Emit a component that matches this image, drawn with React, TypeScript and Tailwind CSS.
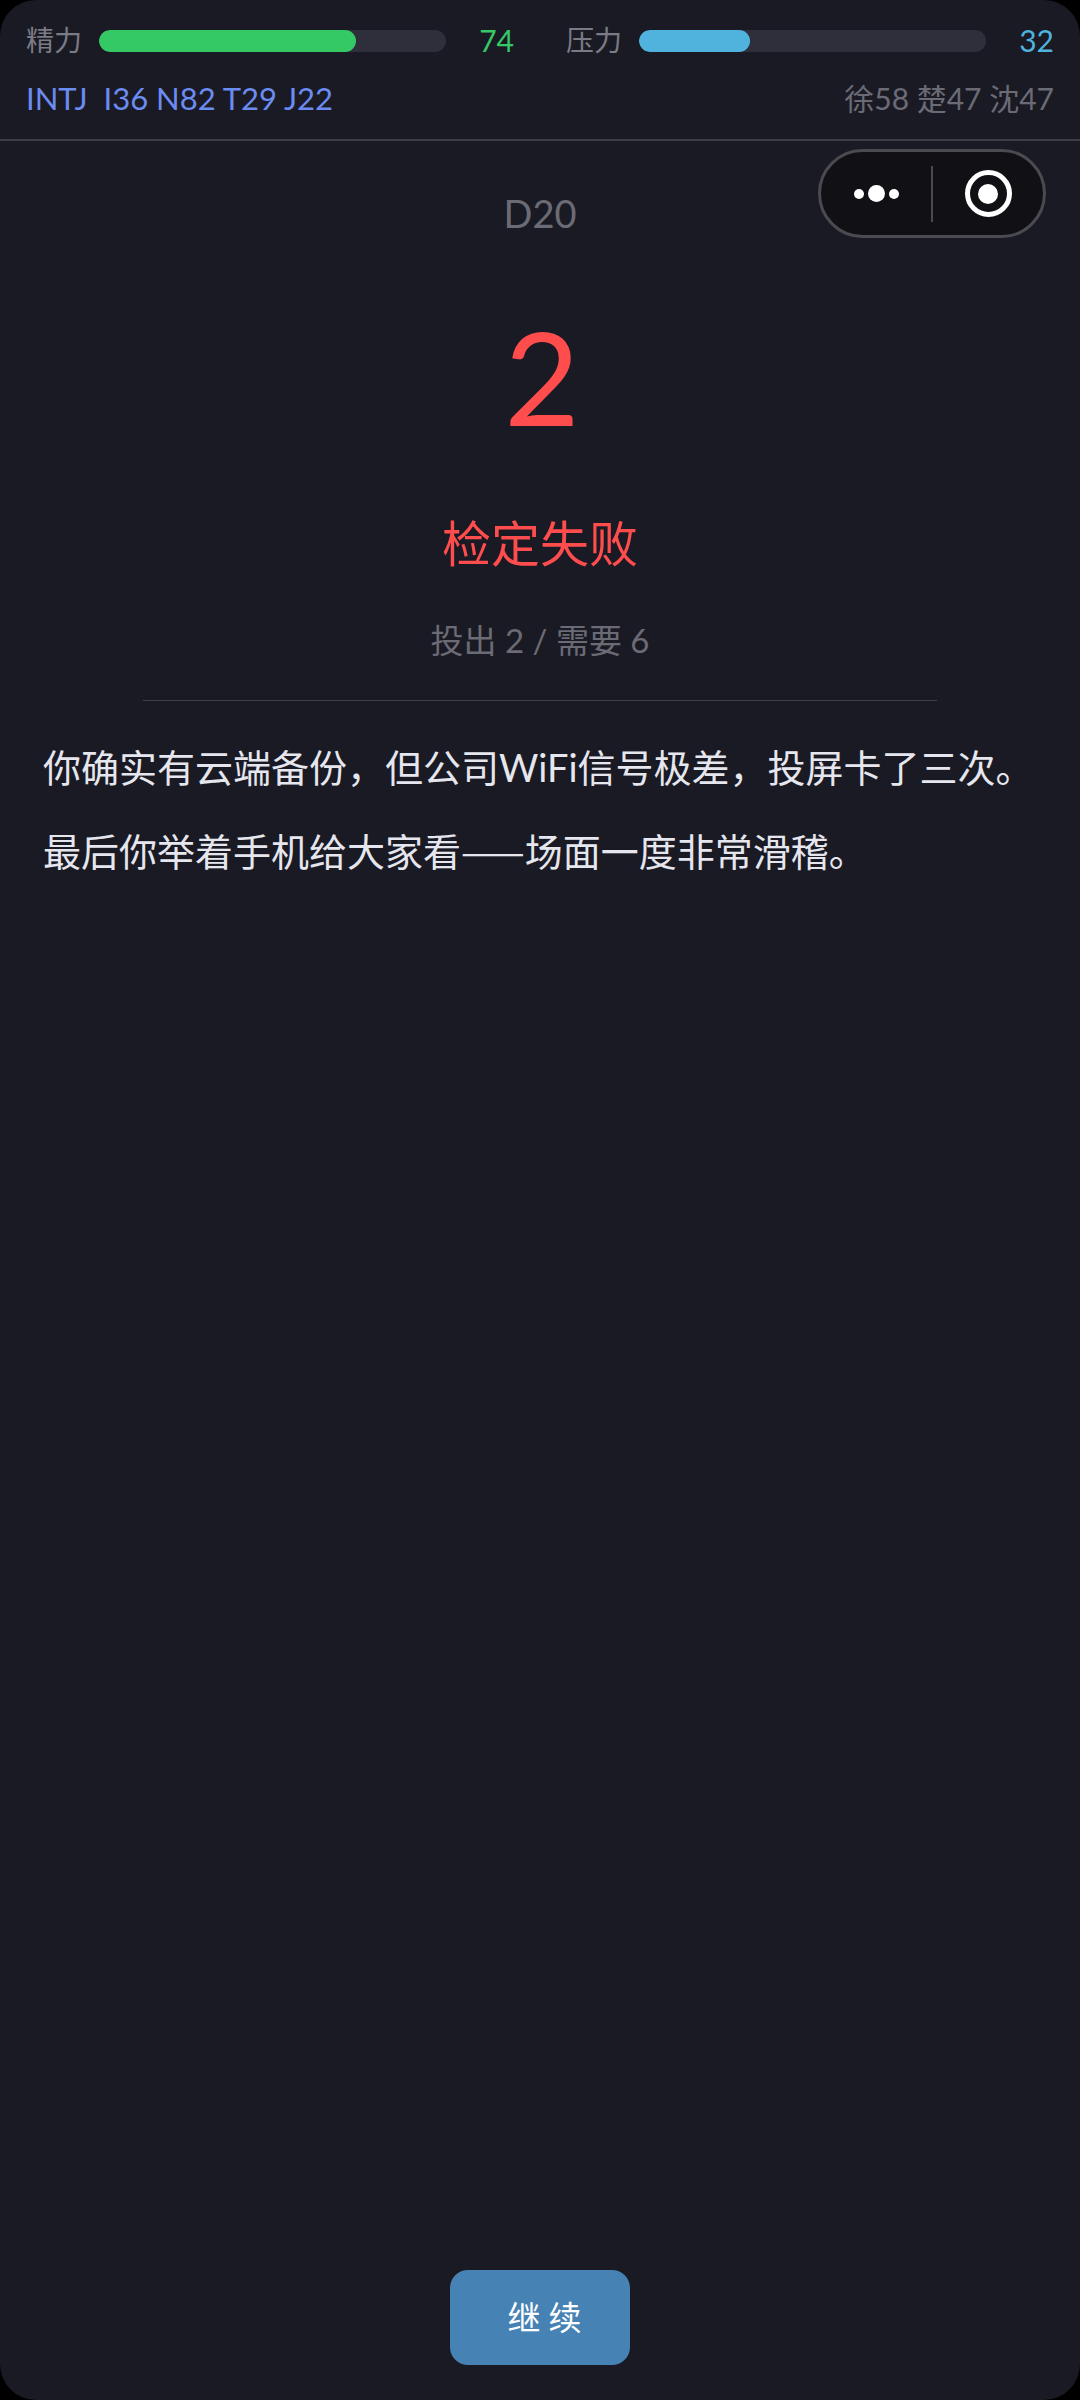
const fontStack = "font-['Lato','Noto_Sans_CJK_SC',sans-serif]";

const StatBar = ({ label, value, percent, fill, text }: { label: string; value: number; percent: number; fill: string; text: string }) => (
  <div className="flex w-[488px] items-center">
    <span className="w-[73px] pb-[2px] text-[28px] leading-[40px] text-[#7b7b85]">{label}</span>
    <div className="h-[22px] w-[347px] overflow-hidden rounded-full bg-[#2f2f3b]">
      <div className={`h-full rounded-full ${fill}`} style={{ width: `${percent}%` }} />
    </div>
    <span className={`flex-1 pb-[2px] text-right text-[30px] leading-[40px] ${text}`}>{value}</span>
  </div>
);

const Capsule = () => (
  <div className="absolute left-[818px] top-[149px] flex h-[89px] w-[228px] items-center rounded-full border-[3px] border-[#4a4a50] bg-[#101015]">
    <div className="flex w-[110px] items-center justify-center gap-[4px]">
      <span className="size-[10px] rounded-full bg-white" />
      <span className="size-[17px] rounded-full bg-white" />
      <span className="size-[10px] rounded-full bg-white" />
    </div>
    <div className="h-[56px] w-[2px] bg-[#4a4a50]" />
    <div className="flex flex-1 items-center justify-center">
      <div className="flex size-[47px] items-center justify-center rounded-full border-[5px] border-white">
        <span className="size-[20px] rounded-full bg-white" />
      </div>
    </div>
  </div>
);

export default function App() {
  return (
    <div className={`h-[2400px] w-[1080px] bg-black ${fontStack}`}>
      <div className="relative flex h-full flex-col overflow-hidden rounded-[36px] bg-[#1a1a24]">
        <header className="h-[141px] border-b-2 border-[#3e3e46] px-[26px] pt-[20px]">
          <div className="flex justify-between">
            <StatBar label="精力" value={74} percent={74} fill="bg-[#34c964]" text="text-[#34c964]" />
            <StatBar label="压力" value={32} percent={32} fill="bg-[#4fb3de]" text="text-[#4fb3de]" />
          </div>
          <div className="mt-[14px] flex items-center justify-between leading-[44px]">
            <span className="whitespace-pre text-[31px] text-[#6b8cf0]">INTJ  I36 N82 T29 J22</span>
            <span className="text-[30px] text-[#6b6b75]">徐58 楚47 沈47</span>
          </div>
        </header>

        <Capsule />

        <main className="flex flex-1 flex-col items-center">
          <div className="mt-[47px] text-[38px] leading-[50px] text-[#6b6b75]">D20</div>
          <div className="mt-[63px] ml-[4px] text-[130px] leading-[150px] text-[#ff4d4d]">2</div>
          <div className="mt-[59px] text-[49px] leading-[66px] text-[#ff4d4d]">检定失败</div>
          <div className="mt-[41px] text-[33px] leading-[46px] text-[#6b6b75]">投出 2 / 需要 6</div>
          <div className="mt-[37px] h-px w-[794px] bg-[#3e3e46]" />
          <div className="mt-[24px] w-full px-[43px] text-[38px] leading-[85px] text-[#e6e6ee]">
            <p>你确实有云端备份，但公司WiFi信号极差，投屏卡了三次。</p>
            <p className="-mt-[3px]">
              最后你举着手机给大家看<span className="font-['Noto_Sans_CJK_SC',sans-serif]">——</span>场面一度非常滑稽。
            </p>
          </div>
          <button className="mt-auto mb-[35px] h-[95px] w-[180px] rounded-[18px] bg-[#4682b4] pl-[17px] text-[33px] tracking-[8px] text-white">
            继续
          </button>
        </main>
      </div>
    </div>
  );
}
